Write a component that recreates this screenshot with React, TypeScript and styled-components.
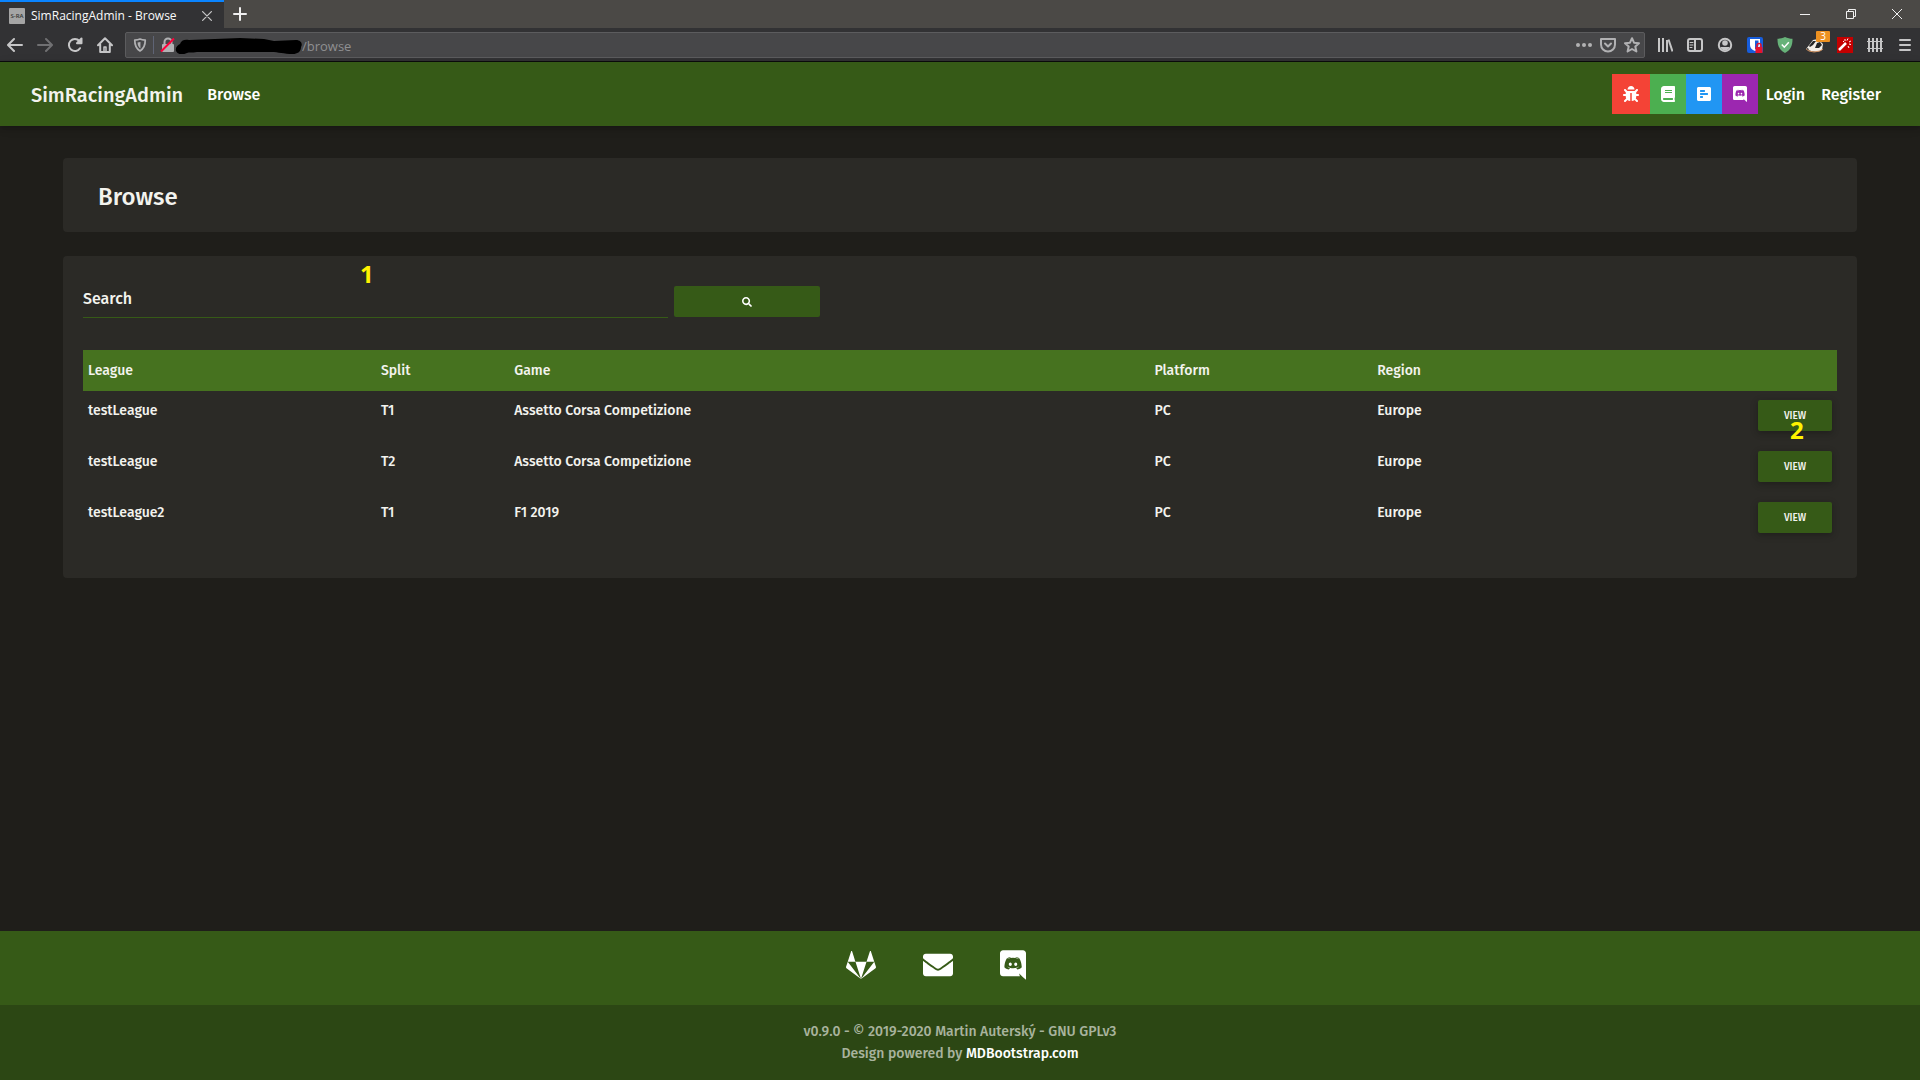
import React from "react";
import styled, { createGlobalStyle } from "styled-components";
import { FaBug, FaBook, FaPollH, FaEnvelope, FaSearch } from "react-icons/fa";

const GlobalStyle = createGlobalStyle`
  *, *::before, *::after { box-sizing: border-box; }
  body {
    margin: 0;
    background: #1f1e1a;
    color: #f3f3ee;
    font-family: "Fira Sans", "Noto Sans", sans-serif;
    font-size: 14px;
    font-weight: 500;
  }
  button, input { font: inherit; color: inherit; border: 0; background: none; padding: 0; }
  button { cursor: pointer; }
  a { color: inherit; text-decoration: none; }
  svg { display: block; flex: none; }
`;

const Page = styled.div`
  display: flex;
  flex-direction: column;
  min-height: 100vh;
`;

/* ---------- browser window ---------- */

const Chrome = styled.div`
  background: #323234;
  border-bottom: 1px solid #0c0c0d;
  color: #c6c6c7;
  font-family: "Open Sans", "Noto Sans", sans-serif;
  font-weight: 400;
`;

const TabStrip = styled.div`
  display: flex;
  height: 28px;
  background: #4b4946;
`;

const Tab = styled.div`
  display: flex;
  align-items: center;
  gap: 6px;
  width: 224px;
  padding: 2px 8px 0 9px;
  border-top: 2px solid #0a84ff;
  background: #323234;
  color: #f9f9fa;
  font-size: 12px;
  line-height: 16px;
`;

const TabTitle = styled.span`
  flex: 1;
  white-space: nowrap;
`;

const Favicon = styled.span`
  width: 16px;
  height: 16px;
  border-radius: 1px;
  background: #a5a5a5;
  color: #333;
  font-size: 6px;
  font-weight: 600;
  line-height: 16px;
  text-align: center;
  white-space: nowrap;
`;

const StripButton = styled.button<{ $width: number }>`
  display: flex;
  align-items: center;
  justify-content: center;
  width: ${(p) => p.$width}px;
  color: #f0f0f0;
`;

const TabClose = styled(StripButton)`
  color: #c6c6c7;
`;

const WindowControls = styled.div`
  display: flex;
  margin-left: auto;
`;

const NavBar = styled.div`
  display: flex;
  align-items: center;
  gap: 5px;
  height: 33px;
`;

const ToolGroup = styled.div`
  display: flex;
`;

const ToolButton = styled.button<{ $dim?: boolean }>`
  position: relative;
  display: flex;
  align-items: center;
  justify-content: center;
  width: 30px;
  height: 28px;
  color: ${(p) => (p.$dim ? "#707072" : "#c6c6c7")};
`;

const Counter = styled.span`
  position: absolute;
  top: 0;
  right: 0;
  width: 14px;
  height: 11px;
  border-radius: 1px;
  background: #ed9121;
  color: #fff;
  font-size: 10px;
  line-height: 11px;
  text-align: center;
`;

const UrlBar = styled.div`
  display: flex;
  flex: 1;
  align-items: center;
  height: 26px;
  padding: 0 4px 0 7px;
  border: 1px solid #5c5c5e;
  border-radius: 2px;
  background: #474749;
  color: #b1b1b3;
`;

const UrlDivider = styled.span`
  width: 1px;
  height: 18px;
  margin: 0 6px;
  background: #5f6475;
`;

const UrlInput = styled.input`
  flex: 1;
  min-width: 0;
  padding-top: 2px;
  color: #8f8f91;
  font-size: 13px;
  line-height: 18px;
  outline: none;
`;

const UrlActions = styled.div`
  display: flex;
  gap: 8px;
`;

const UrlAction = styled.button`
  color: #b1b1b3;
`;

/* ---------- site ---------- */

const Header = styled.header`
  display: flex;
  align-items: center;
  height: 64px;
  padding: 0 39px 0 31px;
  background: #365a17;
  box-shadow: 0 2px 5px rgba(0, 0, 0, 0.16), 0 2px 10px rgba(0, 0, 0, 0.12);
  color: #fff;
  font-size: 16px;
  line-height: 24px;
`;

const NavLink = styled.a`
  padding: 2px 0 0;
`;

const Brand = styled(NavLink)`
  margin-right: 24px;
  color: #f3f3ee;
  font-size: 20px;
`;

const HeaderRight = styled.nav`
  display: flex;
  align-items: center;
  margin-left: auto;
`;

const Badges = styled.div`
  display: flex;
  margin-right: 8px;
`;

const Account = styled.div`
  display: flex;
  gap: 16px;
`;

const Badge = styled.a<{ $color: string; $wide?: boolean }>`
  display: flex;
  align-items: center;
  justify-content: center;
  width: ${(p) => (p.$wide ? 38 : 36)}px;
  height: 40px;
  background: ${(p) => p.$color};
`;

const Main = styled.main`
  display: flex;
  flex: 1;
  flex-direction: column;
  gap: 24px;
  padding: 32px 63px;
`;

const TitleCard = styled.section`
  padding: 22px 35px 18px;
  border-radius: 4px;
  background: #2b2a26;
`;

const Title = styled.h1`
  margin: 0;
  font-size: 24px;
  font-weight: 500;
  line-height: 34px;
`;

const Card = styled.section`
  position: relative;
  padding: 30px 20px 34px;
  border-radius: 4px;
  background: #2b2a26;
`;

const Marker = styled.span<{ $x: string; $y: string }>`
  position: absolute;
  left: ${(p) => p.$x};
  top: ${(p) => p.$y};
  color: #fff200;
  font-family: "Open Sans", "Noto Sans", sans-serif;
  font-size: 24px;
  font-weight: 700;
  line-height: 24px;
  pointer-events: none;
`;

const SearchForm = styled.form`
  display: flex;
  gap: 6px;
  margin-bottom: 32px;
`;

const SearchInput = styled.input`
  width: 33.333%;
  height: 32px;
  padding-bottom: 6px;
  border-bottom: 1px solid #365a17;
  font-size: 16px;
  outline: none;
  &::placeholder { color: #f3f3ee; opacity: 1; }
`;

const SearchButton = styled.button`
  display: flex;
  align-items: center;
  justify-content: center;
  width: 8.333%;
  height: 31px;
  border-radius: 2px;
  background: #365a17;
  color: #fff;
`;

const Table = styled.table`
  width: 100%;
  border-collapse: collapse;
  table-layout: fixed;
  line-height: 20px;
`;

const HeadCell = styled.th<{ $width?: string }>`
  width: ${(p) => p.$width ?? "auto"};
  height: 41px;
  padding: 0 5px;
  background: #46721f;
  font-weight: 500;
  text-align: left;
`;

const Cell = styled.td`
  height: 51px;
  padding: 10px 5px 0;
  vertical-align: top;
`;

const ActionCell = styled(Cell)`
  position: relative;
  padding-top: 9px;
  text-align: right;
`;

const ViewButton = styled.button`
  width: 74px;
  height: 31px;
  border-radius: 2px;
  background: #365a17;
  box-shadow: 0 2px 5px rgba(0, 0, 0, 0.16), 0 2px 10px rgba(0, 0, 0, 0.12);
  font-size: 10px;
  line-height: 16px;
  text-transform: uppercase;
`;

const Footer = styled.footer`
  background: #365a17;
`;

const Social = styled.div`
  display: flex;
  align-items: center;
  justify-content: center;
  height: 74px;
  padding: 0 2px 6px 0;
  color: #fff;
`;

const SocialLink = styled.a`
  margin-right: 47px;
`;

const Legal = styled.div`
  padding: 16px 0 15px;
  background: #2c4714;
  color: #a8b39d;
  line-height: 22px;
  text-align: center;
`;

const LegalLink = styled.a`
  color: #fff;
`;

/* ---------- drawings ---------- */

const DISCORD =
  "M297.216 243.2c0 15.616-11.52 28.416-26.112 28.416-14.336 0-26.112-12.8-26.112-28.416s11.52-28.416 26.112-28.416c14.592 0 26.112 12.8 26.112 28.416zm-119.552-28.416c-14.592 0-26.112 12.8-26.112 28.416s11.776 28.416 26.112 28.416c14.592 0 26.112-12.8 26.112-28.416.256-15.616-11.52-28.416-26.112-28.416zM448 52.736V512c-64.494-56.994-43.868-38.128-118.784-107.776l13.568 47.36H52.48C23.552 451.584 0 428.032 0 398.848V52.736C0 23.552 23.552 0 52.48 0h343.04C424.448 0 448 23.552 448 52.736zm-72.96 242.688c0-82.432-36.864-149.248-36.864-149.248-36.864-27.648-71.936-26.88-71.936-26.88l-3.584 4.096c43.52 13.312 63.744 32.512 63.744 32.512-60.811-33.329-132.244-33.335-191.232-7.424-9.472 4.352-15.104 7.424-15.104 7.424s21.248-20.224 67.328-33.536l-2.56-3.072s-35.072-.768-71.936 26.88c0 0-36.864 66.816-36.864 149.248 0 0 21.504 37.12 78.08 38.912 0 0 9.472-11.52 17.152-21.248-32.512-9.728-44.8-30.208-44.8-30.208 3.766 2.636 9.976 6.053 10.496 6.4 43.21 24.198 104.588 32.126 159.744 8.96 8.96-3.328 18.944-8.192 29.44-15.104 0 0-12.8 20.992-46.336 30.464 7.68 9.728 16.896 20.736 16.896 20.736 56.576-1.792 78.336-38.912 78.336-38.912z";

const DiscordIcon = ({ width, height }: { width: number; height: number }) => (
  <svg width={width} height={height} viewBox="0 0 448 512" fill="currentColor">
    <path d={DISCORD} />
  </svg>
);

const GitlabIcon = () => (
  <svg width="30" height="30" viewBox="0 0 512 512" fill="currentColor">
    <path d="M105.2 24.9c-3.1-8.9-15.7-8.9-18.9 0L29.8 199.7h132c-.1 0-56.6-174.8-56.6-174.8zM.9 287.7c-2.6 8 .3 16.9 7.1 22l247.9 184-226.2-294zm160.8-88l94.3 294 94.3-294zm349.4 88l-28.8-88-226.3 294 247.9-184c6.9-5.1 9.7-14 7.2-22zM425.7 24.9c-3.1-8.9-15.7-8.9-18.9 0l-56.6 174.8h132z" />
  </svg>
);

/* Sixteen-pixel line icon used across the browser toolbar. */
const Glyph = ({ children, size = 16 }: { children: React.ReactNode; size?: number }) => (
  <svg
    width={size}
    height={size}
    viewBox="0 0 16 16"
    fill="none"
    stroke="currentColor"
    strokeWidth="2"
    strokeLinecap="round"
    strokeLinejoin="round"
  >
    {children}
  </svg>
);

const rows = [
  { league: "testLeague", split: "T1", game: "Assetto Corsa Competizione" },
  { league: "testLeague", split: "T2", game: "Assetto Corsa Competizione" },
  { league: "testLeague2", split: "T1", game: "F1 2019" },
];

const BrowserChrome = () => (
  <Chrome>
    <TabStrip>
      <Tab>
        <Favicon>S-RA</Favicon>
        <TabTitle>SimRacingAdmin - Browse</TabTitle>
        <TabClose $width={18} aria-label="Close tab">
          <Glyph size={10}><path d="M1 1l14 14M15 1L1 15" /></Glyph>
        </TabClose>
      </Tab>
      <StripButton $width={32} aria-label="New tab">
        <Glyph><path d="M8 2v12M2 8h12" /></Glyph>
      </StripButton>
      <WindowControls>
        <StripButton $width={46} aria-label="Minimise">
          <svg width="10" height="10" stroke="currentColor"><path d="M0 5.5h10" /></svg>
        </StripButton>
        <StripButton $width={46} aria-label="Restore">
          <svg width="10" height="10" fill="none" stroke="currentColor"><path d="M.5 2.5h7v7h-7zM2.5 2V.5h7v7H8" /></svg>
        </StripButton>
        <StripButton $width={46} aria-label="Close">
          <svg width="10" height="10" stroke="currentColor"><path d="M0 0l10 10M10 0L0 10" /></svg>
        </StripButton>
      </WindowControls>
    </TabStrip>
    <NavBar>
      <ToolGroup>
        <ToolButton aria-label="Back"><Glyph><path d="M15 8H1.5M7 2L1 8l6 6" /></Glyph></ToolButton>
        <ToolButton $dim aria-label="Forward"><Glyph><path d="M1 8h13.5M9 2l6 6-6 6" /></Glyph></ToolButton>
        <ToolButton aria-label="Reload">
          <Glyph><path d="M13 11.2A6 6 0 1 1 12.4 4" /><path d="M14.5 1.5v4.8H10z" fill="currentColor" /></Glyph>
        </ToolButton>
        <ToolButton aria-label="Home">
          <Glyph><path d="M1 8.3L8 1.3l7 7M3.2 7.5V15h9.6V7.5" /><path d="M7 14v-4h2v4" strokeWidth="1.5" /></Glyph>
        </ToolButton>
      </ToolGroup>
      <UrlBar>
        <Glyph size={14}><path d="M8 1.2c2 .9 4 1.1 6 1.2 0 6-1.5 10-6 12.4C3.5 12.400 2 8.4 2 2.4c2-.1 4-.3 6-1.2z" /><path d="M8.500 4.500v7.500C6 10 5.300 8 5.200 5.200z" fill="currentColor" stroke="none" /></Glyph>
        <UrlDivider />
        <svg width="15" height="16" viewBox="0 0 15 16" fill="none">
          <rect x="2" y="7" width="12" height="8" rx="1" fill="#b1b1b3" />
          <path d="M4.5 7V5a3.5 3.5 0 0 1 7 0v2" stroke="#b1b1b3" strokeWidth="2" />
          <path d="M1 14.5L14 1.5" stroke="#ff0039" strokeWidth="2" />
        </svg>
        <svg width="127" height="18" viewBox="0 0 127 18">
          <path d="M1 15C0 11 3 9 5 8 6 4 10 3 14 4l26-1 25-1 24 1 10 2 22-1c5 0 7 4 5 7 0 5-4 7-8 7-10 0-14-2-22-2H40l-18 0c-5 1-8 0-10 1-4 2-9 2-11-2z" fill="#000" />
        </svg>
        <UrlInput aria-label="Address" defaultValue="/browse" />
        <UrlActions>
          <UrlAction aria-label="Page actions">
            <Glyph><g fill="currentColor" stroke="none"><circle cx="2" cy="8" r="2" /><circle cx="8" cy="8" r="2" /><circle cx="14" cy="8" r="2" /></g></Glyph>
          </UrlAction>
          <UrlAction aria-label="Save to Pocket">
            <Glyph><path d="M1 2h14v5.5a7 7 0 0 1-14 0z" /><path d="M5 6.5l3 3 3-3" /></Glyph>
          </UrlAction>
          <UrlAction aria-label="Bookmark">
            <Glyph><path d="M8 1.2l2 4.500 5 .5-3.700 3.300 1.100 5L8 12l-4.400 2.500 1.100-5L1 6.200l5-.5z" /></Glyph>
          </UrlAction>
        </UrlActions>
      </UrlBar>
      <ToolGroup>
        <ToolButton aria-label="Library"><Glyph><path d="M2 1v14M6 1v14M10 3v12" strokeLinecap="butt" /><path d="M11.500 2.500l4 12" strokeLinecap="butt" /></Glyph></ToolButton>
        <ToolButton aria-label="Sidebars"><Glyph><rect x="1" y="2" width="14" height="12" rx="2" /><path d="M8 2v12" /><path d="M3 5.500h3M3 8h3M3 10.500h2" strokeWidth="1" /></Glyph></ToolButton>
        <ToolButton aria-label="Account"><Glyph><circle cx="8" cy="8" r="6.200" /><circle cx="8" cy="6" r="2.800" fill="currentColor" stroke="none" /><path d="M3.500 10h9c-.5 2-2 3.500-4.500 3.500S4 12 3.500 10z" fill="currentColor" stroke="none" /></Glyph></ToolButton>
        <ToolButton aria-label="Password manager">
          <svg width="16" height="16" viewBox="0 0 16 16">
            <rect width="16" height="16" rx="2" fill="#175ddc" />
            <path d="M3 2h10v6c0 3-2 5-5 6-3-1-5-3-5-6z" fill="#fff" />
            <path d="M8 3.500h3.500V8c0 2-1.500 3.500-3.500 4.500z" fill="#175ddc" />
            <rect x="8.500" y="10" width="7" height="6" fill="#e8132c" />
            <path d="M10 10V8.500a2 2 0 0 1 4 0V10" fill="none" stroke="#e8132c" strokeWidth="1.500" />
          </svg>
        </ToolButton>
        <ToolButton aria-label="Ad blocker">
          <svg width="16" height="16" viewBox="0 0 16 16">
            <path d="M8 0c2.500 1.200 5 1.700 7.500 1.800C15.600 8 14 13 8 16 2 13 .4 8 .5 1.800 3 1.700 5.500 1.200 8 0z" fill="#67b279" />
            <path d="M4.800 7.500l2.500 2.700 4.500-5" fill="none" stroke="#fff" strokeWidth="1.500" />
          </svg>
        </ToolButton>
        <ToolButton aria-label="Privacy Badger">
          <svg width="18" height="16" viewBox="0 0 18 16">
            <path d="M0 12l4-5 3-4 5-1 5 5-1 6-5 2-6-1z" fill="#f3ede6" />
            <path d="M3 9l4-5 3 0-3 4-3 2zM9 11l2-5 3-1 2 3-3 3z" fill="#252525" />
            <path d="M0 12l3 2 5 1 6-1 3-2" fill="none" stroke="#ce8f5d" />
            <path d="M0 12l2-1 1 2z" fill="#252525" />
          </svg>
          <Counter>3</Counter>
        </ToolButton>
        <ToolButton aria-label="Magic wand">
          <svg width="16" height="16" viewBox="0 0 16 16">
            <rect width="16" height="16" fill="#c40000" />
            <path d="M2 13l7-7" stroke="#fff" strokeWidth="2.500" />
            <path d="M8 2v2M11 1.500l-1 2M14 4l-2 1M12 7l2 .5M11 9l1 2M6 4l1 1" stroke="#fff" />
          </svg>
        </ToolButton>
        <ToolButton aria-label="Containers"><Glyph><path d="M2 1v14M6 1v14M10 1v14M14 1v14" strokeLinecap="butt" /><path d="M0 4.500h16M0 11.500h16" strokeWidth="1" /></Glyph></ToolButton>
        <ToolButton aria-label="Menu"><Glyph><path d="M3 3h10M3 8h10M3 13h10" /></Glyph></ToolButton>
      </ToolGroup>
    </NavBar>
  </Chrome>
);

export default function App() {
  return (
    <Page>
      <GlobalStyle />
      <BrowserChrome />
      <Header>
        <Brand href="#">SimRacingAdmin</Brand>
        <NavLink href="#browse">Browse</NavLink>
        <HeaderRight>
          <Badges>
            <Badge href="#bugs" $color="#f44336" $wide aria-label="Report a bug"><FaBug size={16} /></Badge>
            <Badge href="#docs" $color="#4caf50" aria-label="Documentation"><FaBook size={16} /></Badge>
            <Badge href="#poll" $color="#2196f3" aria-label="Survey"><FaPollH size={16} /></Badge>
            <Badge href="#discord" $color="#9c27b0" aria-label="Discord"><DiscordIcon width={14} height={16} /></Badge>
          </Badges>
          <Account>
            <NavLink href="#login">Login</NavLink>
            <NavLink href="#register">Register</NavLink>
          </Account>
        </HeaderRight>
      </Header>
      <Main>
        <TitleCard>
          <Title>Browse</Title>
        </TitleCard>
        <Card>
          <SearchForm>
            <SearchInput type="text" placeholder="Search" aria-label="Search" />
            <SearchButton type="button" aria-label="Run search"><FaSearch size={10} /></SearchButton>
          </SearchForm>
          <Marker $x="297px" $y="6px">1</Marker>
          <Table>
            <thead>
              <tr>
                <HeadCell $width="16.7%">League</HeadCell>
                <HeadCell $width="7.6%">Split</HeadCell>
                <HeadCell $width="36.5%">Game</HeadCell>
                <HeadCell $width="12.7%">Platform</HeadCell>
                <HeadCell $width="13%">Region</HeadCell>
                <HeadCell />
              </tr>
            </thead>
            <tbody>
              {rows.map((row, i) => (
                <tr key={i}>
                  <Cell>{row.league}</Cell>
                  <Cell>{row.split}</Cell>
                  <Cell>{row.game}</Cell>
                  <Cell>PC</Cell>
                  <Cell>Europe</Cell>
                  <ActionCell>
                    <ViewButton>View</ViewButton>
                    {i === 0 && <Marker $x="calc(100% - 47px)" $y="27px">2</Marker>}
                  </ActionCell>
                </tr>
              ))}
            </tbody>
          </Table>
        </Card>
      </Main>
      <Footer>
        <Social>
          <SocialLink href="#gitlab" aria-label="GitLab"><GitlabIcon /></SocialLink>
          <SocialLink href="#mail" aria-label="E-mail"><FaEnvelope size={30} /></SocialLink>
          <SocialLink href="#chat" aria-label="Discord"><DiscordIcon width={26} height={30} /></SocialLink>
        </Social>
        <Legal>
          v0.9.0 - © 2019-2020 Martin Auterský - GNU GPLv3
          <br />
          Design powered by <LegalLink href="#mdb">MDBootstrap.com</LegalLink>
        </Legal>
      </Footer>
    </Page>
  );
}
